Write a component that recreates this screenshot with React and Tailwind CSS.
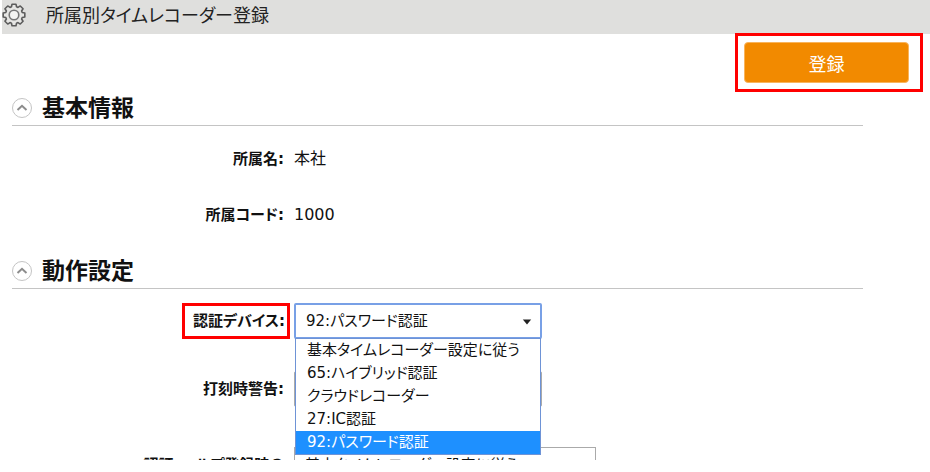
import { useState } from "react";

const devices = [
  "基本タイムレコーダー設定に従う",
  "65:ハイブリッド認証",
  "クラウドレコーダー",
  "27:IC認証",
  "92:パスワード認証",
];

function GearIcon() {
  const teeth = 8;
  const points = [];
  for (let i = 0; i < teeth; i++) {
    const a = (i * 2 * Math.PI) / teeth - Math.PI / 2;
    [
      [-0.3, 8.6],
      [-0.18, 11],
      [0.18, 11],
      [0.3, 8.6],
    ].forEach(([d, r]) => {
      points.push(`${(12 + r * Math.cos(a + d)).toFixed(2)},${(12 + r * Math.sin(a + d)).toFixed(2)}`);
    });
  }
  return (
    <svg className="size-6 shrink-0" viewBox="0 0 24 24" fill="#e6e6e4" stroke="#5c5c5c" strokeWidth="1.6" strokeLinejoin="round" aria-hidden="true">
      <polygon points={points.join(" ")} />
      <circle cx="12" cy="12" r="4.8" fill="#f4f4f2" stroke="#777" />
    </svg>
  );
}

function SectionHeading({ title }) {
  return (
    <div className="ml-3 flex h-9 items-center gap-2.5 border-b border-[#c4c4c4]">
      <button type="button" aria-label={title} className="flex size-5 shrink-0 items-center justify-center rounded-full border border-[#c4c4c4] bg-white">
        <svg className="size-3" viewBox="0 0 12 12" fill="none" stroke="#8c8c8c" strokeWidth="2" aria-hidden="true">
          <path d="M1.5 8 6 3.8 10.5 8" />
        </svg>
      </button>
      <h2 className="text-[23px] font-bold leading-8">{title}</h2>
    </div>
  );
}

function Arrow() {
  return (
    <svg className="pointer-events-none absolute right-2.5 top-4 h-1.5 w-2.5" viewBox="0 0 12 6" fill="#222" aria-hidden="true">
      <path d="M1 0h10L6 6z" />
    </svg>
  );
}

export default function App() {
  const [device, setDevice] = useState(devices[4]);

  return (
    <div className="bg-white pb-3 text-[15px] text-[#111] [font-family:'DejaVu_Sans','Noto_Sans_CJK_JP',sans-serif] [font-feature-settings:'palt']">
      <div className="h-[460px] overflow-hidden">
        <header className="ml-0.5 flex h-[34px] items-center gap-5 bg-[#dfdfdd] pb-1">
          <GearIcon />
          <h1 className="pt-0.5 text-lg leading-7 text-[#222]">所属別タイムレコーダー登録</h1>
        </header>

        <div className="mr-[7px] flex justify-end">
          <div className="-mt-px h-[59px] border-[3px] border-[#ff0000] py-1.5 pl-1.5 pr-[11px]">
            <button type="button" className="h-[41px] w-[165px] rounded border border-[#f9b45c] bg-[#f28a00] pt-1 text-lg text-white">
              登録
            </button>
          </div>
        </div>

        <section className="-mt-0.5 mr-[67px]">
          <SectionHeading title="基本情報" />
          <dl className="grid grid-cols-[284px_1fr] gap-x-2.5 gap-y-8 pb-[26px] pt-[21px] leading-6">
            <dt className="text-right font-bold">所属名:</dt>
            <dd className="text-base">本社</dd>
            <dt className="text-right font-bold">所属コード:</dt>
            <dd className="text-base">1000</dd>
          </dl>
        </section>

        <section className="mr-[67px]">
          <SectionHeading title="動作設定" />
          <div className="grid grid-cols-[290px_248px] items-center gap-x-1 pt-3.5">
            <div className="flex justify-end">
              <label htmlFor="device" className="border-[3px] border-[#ff0000] py-[3px] pl-2 pr-0.5 font-bold leading-6">
                認証デバイス:
              </label>
            </div>
            <div className="relative">
              <select
                id="device"
                value={device}
                onChange={(e) => setDevice(e.target.value)}
                className="block h-9 w-full appearance-none rounded-xs border-2 border-[#78a0e6] bg-white pl-2.5"
              >
                {devices.map((d) => (
                  <option key={d}>{d}</option>
                ))}
              </select>
              <Arrow />
              <ul role="listbox" aria-label="認証デバイス" className="absolute inset-x-px top-[35px] z-10 border border-[#6e93d6] bg-white">
                {devices.map((d) => (
                  <li
                    key={d}
                    role="option"
                    aria-selected={d === device}
                    onClick={() => setDevice(d)}
                    className={`h-[23px] whitespace-nowrap pl-[11px] leading-[23px] ${d === device ? "bg-[#1e90ff] text-white" : ""}`}
                  >
                    {d}
                  </li>
                ))}
              </ul>
            </div>

            <label htmlFor="warning" className="mt-8 pr-1.5 text-right font-bold leading-9">
              打刻時警告:
            </label>
            <select id="warning" className="mt-8 h-9 w-full appearance-none rounded-xs border border-[#aaa] bg-white" />

            <label htmlFor="help" className="mt-10 pr-1.5 text-right font-bold leading-9">
              認証・ヘルプ登録時の
            </label>
            <div className="mt-10 w-[302px]">
              <select id="help" className="block h-9 w-full appearance-none border border-[#aaa] bg-white pl-2.5">
                <option>基本タイムレコーダー設定に従う</option>
              </select>
            </div>
          </div>
        </section>
      </div>
    </div>
  );
}
